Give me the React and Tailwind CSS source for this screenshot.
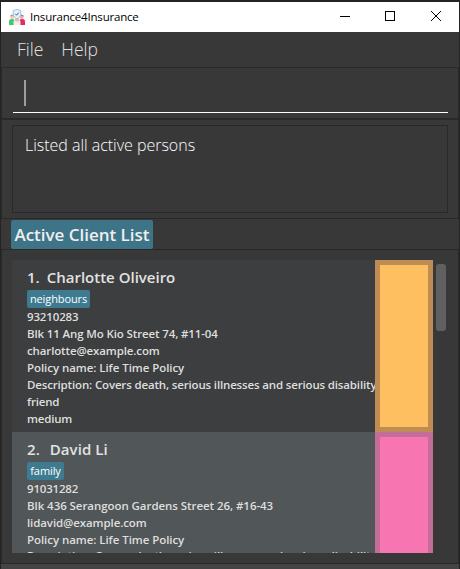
import React from 'react';

const clients = [
  {
    id: 1,
    name: 'Charlotte Oliveiro',
    heading: 'gap-[7px]',
    tag: 'neighbours',
    tagWidth: 'w-[63px]',
    row: 'bg-[#3c3e3f]',
    swatch: 'border-[#c08c55] bg-[#fdbf60]',
    lines: [
      ['93210283', 'tracking-[-0.15px]'],
      ['Blk 11 Ang Mo Kio Street 74, #11-04', 'tracking-[-0.13px]'],
      ['charlotte@example.com', 'tracking-[-0.13px]'],
      ['Policy name: Life Time Policy', 'tracking-[-0.06px]'],
      ['Description: Covers death, serious illnesses and serious disability', 'tracking-[-0.155px]'],
      ['friend', 'tracking-[-0.2px]'],
      ['medium', 'tracking-[-0.2px]'],
    ],
  },
  {
    id: 2,
    name: 'David Li',
    heading: 'gap-[10px] tracking-[0.05px]',
    tag: 'family',
    tagWidth: 'w-[37px]',
    row: 'bg-[#515658]',
    swatch: 'border-[#c36d98] bg-[#f775b0]',
    lines: [
      ['91031282', 'tracking-[-0.2px]'],
      ['Blk 436 Serangoon Gardens Street 26, #16-43', 'tracking-[-0.06px]'],
      ['lidavid@example.com', 'tracking-[-0.1px]'],
      ['Policy name: Life Time Policy', 'tracking-[-0.06px]'],
      ['Description: Covers death, serious illnesses and serious disability', '-mt-px tracking-[-0.155px]'],
    ],
  },
];

function AppIcon() {
  return (
    <svg width="16" height="16" viewBox="0 0 16 16" className="shrink-0">
      <circle cx="3.2" cy="8" r="1.9" fill="#f3c6a5" />
      <circle cx="12.8" cy="8" r="1.9" fill="#e9b497" />
      <path d="M1.300 7.600c0-2.600 3.600-2.600 3.800 0l-1.900-1z" fill="#a58078" />
      <path d="M10.900 7.600c.2-2.600 3.800-2.600 3.800 0l-1.900-1z" fill="#8d6a68" />
      <path d="M0 16v-3.500C0 10.500 1.500 10 3 10s3 .7 3 2.500V16z" fill="#3fc970" />
      <path d="M10 16v-3.500c0-1.800 1.500-2.500 3-2.500s3 .5 3 2.500V16z" fill="#e8286b" />
      <path d="M4.500 16v-3c0-1.800 1.600-2.500 3.500-2.500s3.500.7 3.500 2.500v3z" fill="#f2eef0" />
      <circle cx="8" cy="10.500" r="2.200" fill="#f0bc9e" />
      <path d="M8 .3l3.800 1.400v3.300c0 2.200-1.400 3.800-3.800 4.800-2.400-1-3.800-2.600-3.800-4.800V1.700z" fill="#e6f1ff" stroke="#94bce8" strokeWidth=".9" />
      <path d="M6.300 4.800l1.300 1.400 2.300-2.600" fill="none" stroke="#4a5c98" strokeWidth="1" />
    </svg>
  );
}

function TitleBar() {
  return (
    <header className="flex h-[30px] shrink-0 items-center bg-white pl-2 text-black">
      <AppIcon />
      <span className="ml-[5px] text-[11.5px] tracking-[-0.2px]">Insurance4Insurance</span>
      <svg className="ml-auto" width="119" height="30" viewBox="0 0 119 30" fill="none" stroke="#000">
        <path d="M0 14.500h10M45.500 9.500h9v9h-9z" shapeRendering="crispEdges" />
        <path d="M91 9l10 10M101 9l-10 10" />
      </svg>
    </header>
  );
}

function ClientRow({ client }) {
  return (
    <article className={`flex h-[172px] shrink-0 ${client.row}`}>
      <div className="w-[363px] overflow-hidden pl-[15px] pt-[5px]">
        <h2 className={`flex h-[25px] items-center whitespace-nowrap text-[15px] font-semibold leading-[25px] text-[#e2e2e2] ${client.heading}`}>
          <span>{client.id}.</span>
          <span>{client.name}</span>
        </h2>
        <div className={`flex h-[18px] items-center justify-center rounded-[2px] bg-[#3e7b91] pb-0.5 text-[11px] leading-none tracking-[-0.1px] text-white ${client.tagWidth}`}>
          {client.tag}
        </div>
        {client.lines.map(([text, tracking]) => (
          <p key={text} className={`h-[17px] whitespace-nowrap text-[11.5px] font-semibold leading-[17px] text-[#dedede] ${tracking}`}>
            {text}
          </p>
        ))}
      </div>
      <div className={`w-[58px] border-[5px] ${client.swatch}`} />
    </article>
  );
}

export default function App() {
  return (
    <div className="flex h-[569px] w-[460px] flex-col overflow-hidden border-l border-r border-t-2 border-[#242424] bg-[#383838] font-['Open_Sans','Noto_Sans',sans-serif]">
      <TitleBar />
      <nav className="flex h-[35px] shrink-0 items-center gap-[18px] pl-4 text-[17.5px] font-light text-[#e0e0e0]">
        <span>File</span>
        <span>Help</span>
      </nav>
      <section className="h-[53px] shrink-0 border-x border-b-2 border-t border-[#292929] pl-[11px] pr-[10px]">
        <div className="flex h-[45px] items-start border-b border-white pl-[11px] pt-3">
          <div className="h-[26px] w-[2px] bg-[#9d9d9d]" />
        </div>
      </section>
      <section className="h-[98px] shrink-0 border-x border-[#292929] px-[10px] pt-[5px]">
        <div className="h-[88px] border border-[#292929] pl-3 pt-[7px] text-[16px] font-light leading-[24px] tracking-[-0.02px] text-white">
          Listed all active persons
        </div>
      </section>
      <section className="flex h-[32px] shrink-0 items-end border-y border-[#292929] pl-[10px]">
        <h1 className="flex h-[29px] w-[142px] items-center justify-center whitespace-nowrap rounded-[2px] bg-[#3e7488] text-[17px] font-semibold tracking-[-0.02px] text-[#eeeeee]">
          Active Client List
        </h1>
      </section>
      <section className="flex h-[313px] shrink-0 border-x border-[#292929] pl-[10px] pt-[10px]">
        <div className="flex h-[293px] w-[421px] flex-col overflow-hidden">
          {clients.map((client) => (
            <ClientRow key={client.id} client={client} />
          ))}
        </div>
        <div className="ml-[3px] mt-[4px] h-[67px] w-[10px] rounded-[3px] bg-[#606060]" />
      </section>
      <footer className="h-[6px] shrink-0 border-t border-[#292929] bg-[#444444]" />
    </div>
  );
}
